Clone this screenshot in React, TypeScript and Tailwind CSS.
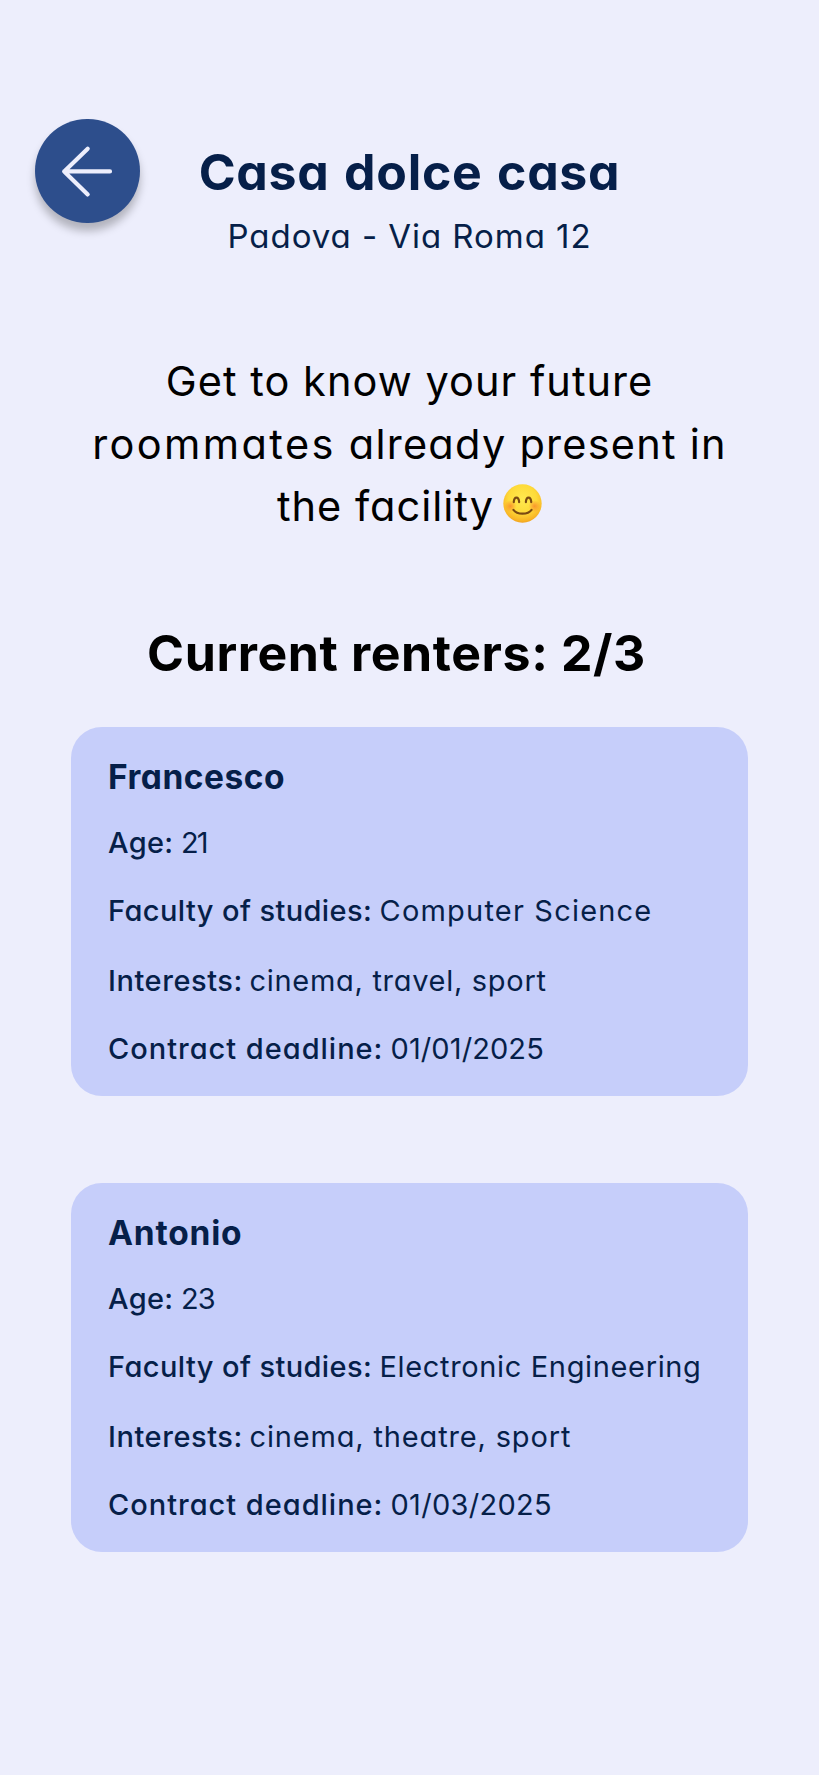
type Detail = {
  label: string;
  value: string;
  rowClass: string;
  labelClass: string;
  valueClass: string;
};

type Renter = { name: string; nameClass: string; details: Detail[] };

const AGE_ROW = "h-[68px]";
const FACULTY_ROW = "h-[68px]";
const INTERESTS_ROW = "h-[71px]";
const DEADLINE_ROW = "h-[66px]";

const AGE_LABEL = "w-[73px] tracking-[0.3px]";
const FACULTY_LABEL = "w-[271.5px] tracking-[0.4px]";
const INTERESTS_LABEL = "w-[141.5px] tracking-[0.55px]";
const DEADLINE_LABEL = "w-[282.5px] tracking-[0.98px]";

const renters: Renter[] = [
  {
    name: "Francesco",
    nameClass: "tracking-[0.5px]",
    details: [
      { label: "Age:", value: "21", rowClass: AGE_ROW, labelClass: AGE_LABEL, valueClass: "tracking-[-2px]" },
      { label: "Faculty of studies:", value: "Computer Science", rowClass: FACULTY_ROW, labelClass: FACULTY_LABEL, valueClass: "tracking-[1.2px]" },
      { label: "Interests:", value: "cinema, travel, sport", rowClass: INTERESTS_ROW, labelClass: INTERESTS_LABEL, valueClass: "tracking-[0.7px]" },
      { label: "Contract deadline:", value: "01/01/2025", rowClass: DEADLINE_ROW, labelClass: DEADLINE_LABEL, valueClass: "tracking-[0.1px]" },
    ],
  },
  {
    name: "Antonio",
    nameClass: "tracking-[0.8px]",
    details: [
      { label: "Age:", value: "23", rowClass: AGE_ROW, labelClass: AGE_LABEL, valueClass: "tracking-[-1px]" },
      { label: "Faculty of studies:", value: "Electronic Engineering", rowClass: FACULTY_ROW, labelClass: FACULTY_LABEL, valueClass: "tracking-[0.65px]" },
      { label: "Interests:", value: "cinema, theatre, sport", rowClass: INTERESTS_ROW, labelClass: INTERESTS_LABEL, valueClass: "tracking-[0.84px]" },
      { label: "Contract deadline:", value: "01/03/2025", rowClass: DEADLINE_ROW, labelClass: DEADLINE_LABEL, valueClass: "tracking-[0.3px]" },
    ],
  },
];

function BackButton() {
  return (
    <button
      type="button"
      aria-label="Back"
      className="block size-[104.5px] rounded-full bg-[#2d4e8c] shadow-[0_8px_8px_rgba(0,0,0,0.25)]"
    >
      <svg viewBox="0 0 104.5 104.5" className="size-full" fill="none" stroke="#edeefc" strokeWidth="4.2" strokeLinecap="round" strokeLinejoin="round">
        <path d="M75 52.4H29.2M52.7 29.8L29.2 52.4L52.7 75.4" />
      </svg>
    </button>
  );
}

function SmilingFace() {
  return (
    <svg role="img" aria-label="😊" viewBox="0 0 116 116" className="mt-[-7px] ml-[9px] size-[39px]">
      <defs>
        <radialGradient id="face" cx="0.5" cy="0.38" r="0.66">
          <stop offset="0" stopColor="#ffe94f" />
          <stop offset="0.55" stopColor="#fedb3a" />
          <stop offset="0.85" stopColor="#f9b626" />
          <stop offset="1" stopColor="#ec981c" />
        </radialGradient>
        <radialGradient id="cheek">
          <stop offset="0" stopColor="#f98a2b" stopOpacity="0.85" />
          <stop offset="1" stopColor="#f98a2b" stopOpacity="0" />
        </radialGradient>
      </defs>
      <circle cx="58" cy="58" r="57" fill="url(#face)" />
      <circle cx="22" cy="66" r="18" fill="url(#cheek)" />
      <circle cx="94" cy="66" r="18" fill="url(#cheek)" />
      <g fill="none" stroke="#7a4a12" strokeWidth="6.5" strokeLinecap="round">
        <path d="M32 54C33 36 47 36 48 54" />
        <path d="M68 54C69 36 83 36 84 54" />
        <path d="M31 77C42 92 74 92 85 77" />
      </g>
    </svg>
  );
}

function RenterCard({ renter }: { renter: Renter }) {
  return (
    <section className="h-[369px] w-[677px] rounded-[31px] bg-[#c6cefa] pt-[30px] pl-[37px] text-[#061f49]">
      <h3 className={`mb-[12px] h-10 text-[33.5px] leading-10 font-[650] ${renter.nameClass}`}>{renter.name}</h3>
      {renter.details.map((d) => (
        <p key={d.label} className={`flex items-center text-[29px] whitespace-nowrap ${d.rowClass}`}>
          <span className={`shrink-0 font-medium ${d.labelClass}`}>{d.label}</span>
          <span className={d.valueClass}>{d.value}</span>
        </p>
      ))}
    </section>
  );
}

export default function App() {
  return (
    <main className="flex h-[1775px] w-[819px] flex-col bg-[#edeefc] pt-[118px] font-['Inter','Liberation_Sans',sans-serif] [font-feature-settings:'cv11']">
      <header className="grid h-[232px] grid-cols-[164px_1fr_164px] text-center whitespace-nowrap text-[#061f49]">
        <div className="flex items-start pt-[0.5px] pl-[35px]">
          <BackButton />
        </div>
        <div className="pt-6">
          <h1 className="text-[50px] leading-[60px] font-[650] tracking-[0.7px] [word-spacing:2px]">Casa dolce casa</h1>
          <p className="mt-[14px] text-[33px] leading-10 tracking-[0.95px]">Padova - Via Roma 12</p>
        </div>
      </header>
      <div className="flex flex-col items-center text-[41.5px] leading-[62.7px] whitespace-nowrap text-black">
        <p className="tracking-[1.05px]">Get to know your future</p>
        <p className="tracking-[1.25px]">
          <span className="tracking-[2.4px]">roommates</span> already present in
        </p>
        <p className="flex items-center tracking-[1px]">
          the facility
          <SmilingFace />
        </p>
      </div>
      <h2 className="mt-[85px] pr-[26px] text-center text-[50px] leading-[60px] font-[650] tracking-[0.6px] text-black">
        Current renters: 2/3
      </h2>
      <div className="mt-[44px] ml-[71px] flex flex-col gap-[87px]">
        {renters.map((r) => (
          <RenterCard key={r.name} renter={r} />
        ))}
      </div>
    </main>
  );
}
